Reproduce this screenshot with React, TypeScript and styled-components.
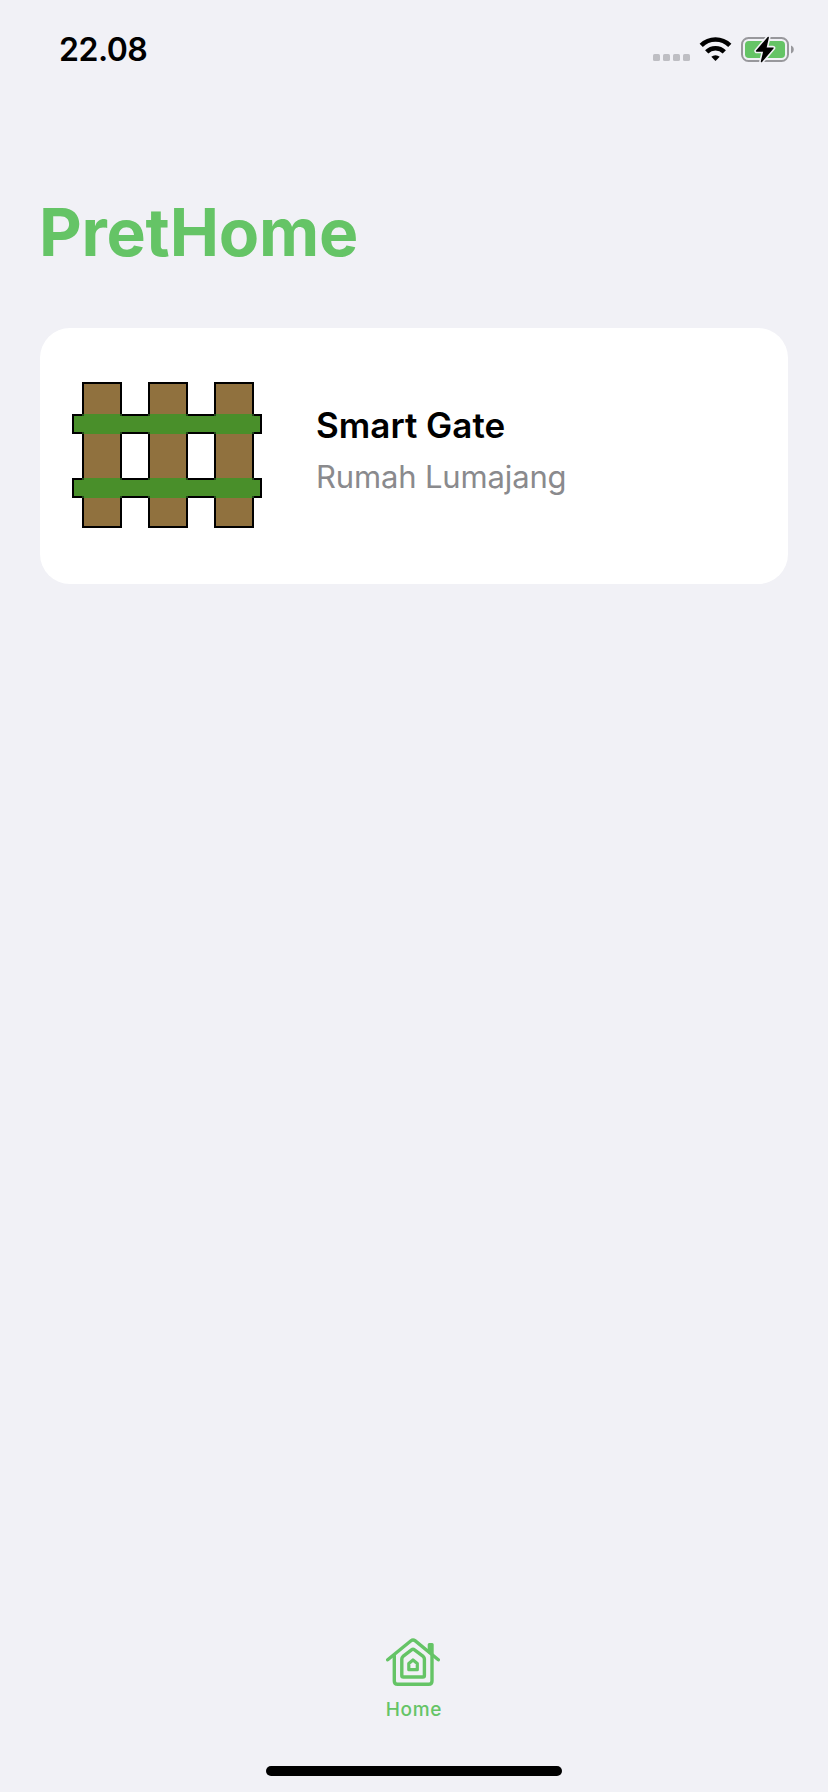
import React from "react";
import styled, { createGlobalStyle } from "styled-components";

const GlobalStyle = createGlobalStyle`
  * { box-sizing: border-box; }
  body { margin: 0; background: #f1f1f6; font-family: Inter, "Liberation Sans", sans-serif; }
`;

const green = "#65c466";

const Screen = styled.div`
  width: 828px;
  height: 1792px;
  display: flex;
  flex-direction: column;
  background: #f1f1f6;
  overflow: hidden;
`;

const StatusBar = styled.header`
  height: 100px;
  display: flex;
  justify-content: space-between;
  align-items: flex-start;
  padding: 30px 34px 0 59px;
`;

const Clock = styled.time`
  font-size: 32px;
  line-height: 40px;
  font-weight: 600;
  letter-spacing: -0.5px;
  color: #000;
`;

const StatusIcons = styled.div`
  display: flex;
  padding-top: 4px;
`;

const Title = styled.h1`
  margin: 92px 0 0 39px;
  font-size: 66px;
  line-height: 80px;
  font-weight: 700;
  letter-spacing: -0.25px;
  color: ${green};
`;

const Card = styled.article`
  height: 256px;
  margin: 56px 40px 0;
  padding: 0 32px 2px;
  display: flex;
  align-items: center;
  gap: 54px;
  border-radius: 30px;
  background: #fff;
`;

const CardText = styled.div`
  display: flex;
  flex-direction: column;
  gap: 12px;
  padding-bottom: 10px;
`;

const DeviceName = styled.h2`
  margin: 0;
  font-size: 35px;
  line-height: 42px;
  font-weight: 600;
  letter-spacing: 0;
  color: #000;
`;

const Location = styled.p`
  margin: 0;
  font-size: 31px;
  line-height: 38px;
  font-weight: 400;
  letter-spacing: -0.15px;
  color: #8a8a8d;
`;

const TabBar = styled.nav`
  margin-top: auto;
  height: 155px;
  display: flex;
  flex-direction: column;
  align-items: center;
`;

const Tab = styled.a`
  display: flex;
  flex-direction: column;
  align-items: center;
  height: 129px;
  color: ${green};
`;

const TabLabel = styled.span`
  margin-top: 11px;
  font-size: 19px;
  line-height: 24px;
  font-weight: 500;
  letter-spacing: 0.7px;
`;

const HomeIndicator = styled.div`
  width: 296px;
  height: 10px;
  border-radius: 5px;
  background: #000;
`;

const StatusGlyphs = () => (
  <svg width="144" height="32" viewBox="650 34 144 32">
    {[653, 663, 673, 683].map((x) => (
      <rect key={x} x={x} y="54" width="7" height="7" rx="1.6" fill="#bebec3" />
    ))}
    <g fill="none" stroke="#000" strokeWidth="4.6">
      <path d="M701.2 45.4 A20.4 20.4 0 0 1 729.8 45.4" />
      <path d="M706.7 51.8 A12.5 12.5 0 0 1 724.3 51.8" />
    </g>
    <path d="M711.3 56.8 A6.2 6.2 0 0 1 719.7 56.8 L715.5 61Z" fill="#000" />
    <rect x="742" y="38" width="46" height="23" rx="6.5" fill="none" stroke="#98989c" strokeWidth="2" />
    <rect x="745" y="41" width="40" height="17" rx="3.8" fill={green} />
    <path d="M791 45.5 C794.7 46.8 794.7 52.2 791 53.5Z" fill="#98989c" />
    <path
      d="M768.2 37.5 L756.6 51 H764 L761.5 61.5 L773 48.1 H765.8Z"
      fill="#000"
      stroke="#f1f1f6"
      strokeWidth="4.6"
      strokeLinejoin="round"
    />
    <path
      d="M768.2 37.5 L756.6 51 H764 L761.5 61.5 L773 48.1 H765.8Z"
      fill="#000"
      stroke="#000"
      strokeWidth="1.4"
      strokeLinejoin="round"
    />
  </svg>
);

const posts = [10, 76, 142];
const rails = [32, 96];

const FenceIcon = () => (
  <svg width="190" height="146" viewBox="0 0 190 146" shapeRendering="crispEdges">
    {posts.map((x) => (
      <rect key={x} x={x + 1} y="1" width="38" height="144" fill="#90713e" stroke="#000" strokeWidth="2" />
    ))}
    {rails.map((y) => (
      <g key={y}>
        <rect x="1" y={y + 1} width="188" height="18" fill="#498f2a" stroke="#000" strokeWidth="2" />
        {posts.map((x) => (
          <g key={x}>
            <rect x={x} y={y} width="40" height="20" fill="#24471b" />
            <rect x={x + 2} y={y} width="36" height="20" fill="#498f2a" />
            <rect x={x} y={y + 2} width="40" height="16" fill="#498f2a" />
          </g>
        ))}
      </g>
    ))}
  </svg>
);

const HouseIcon = () => (
  <svg
    width="56"
    height="50"
    viewBox="386 1637 56 50"
    fill="none"
    stroke={green}
    strokeWidth="3.4"
    strokeLinecap="round"
    strokeLinejoin="round"
  >
    <path d="M387.7 1659.8 L411 1640.7 Q413 1639.1 415 1640.7 L438.3 1659.8" />
    <path d="M394.3 1655.5 V1681 Q394.3 1684.3 397.6 1684.3 H428.7 Q432 1684.3 432 1681 V1655.5" />
    <path d="M429.2 1652 V1644.6 H432.2 V1654" strokeWidth="3" fill={green} />
    <path d="M401.8 1659 Q401.8 1657.5 403 1656.4 L411.5 1649.8 Q413 1648.7 414.5 1649.8 L423.2 1656.4 Q424.4 1657.5 424.4 1659 V1675.5 Q424.4 1677 422.9 1677 H403.3 Q401.8 1677 401.8 1675.5Z" />
    <path d="M408.8 1663.4 L413 1660 L417.3 1663.4 V1669.7 H408.8Z" strokeWidth="3.2" />
  </svg>
);

export default function App() {
  return (
    <Screen>
      <GlobalStyle />
      <StatusBar>
        <Clock>22.08</Clock>
        <StatusIcons>
          <StatusGlyphs />
        </StatusIcons>
      </StatusBar>
      <Title>PretHome</Title>
      <Card>
        <FenceIcon />
        <CardText>
          <DeviceName>Smart Gate</DeviceName>
          <Location>Rumah Lumajang</Location>
        </CardText>
      </Card>
      <TabBar>
        <Tab>
          <HouseIcon />
          <TabLabel>Home</TabLabel>
        </Tab>
        <HomeIndicator />
      </TabBar>
    </Screen>
  );
}
